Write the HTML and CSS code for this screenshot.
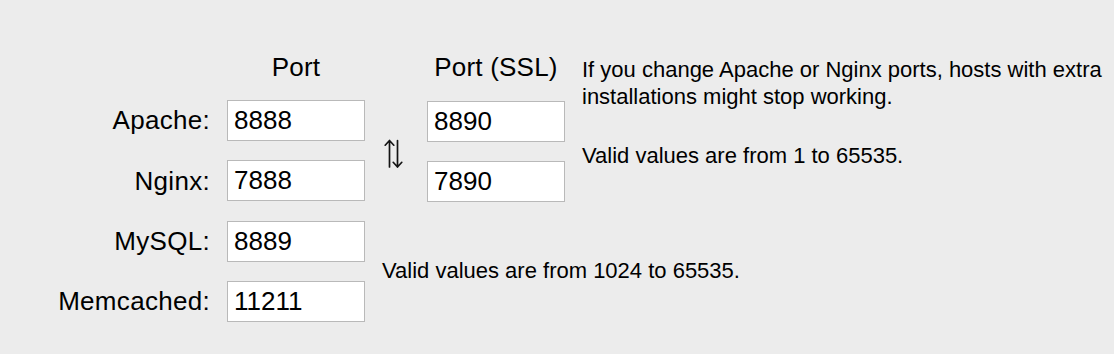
FILE: index.html
```html
<!DOCTYPE html>
<html lang="en">
<head>
<meta charset="utf-8">
<title>Ports</title>
<link rel="stylesheet" href="styles.css">
</head>
<body>
<div class="ports">
  <div class="head head-port">Port</div>
  <div class="head head-ssl">Port (SSL)</div>
  <div class="note">
    <p class="note-line">If you change Apache or Nginx ports, hosts with extra installations might stop working.</p>
    <p class="note-range">Valid values are from 1 to 65535.</p>
  </div>

  <label class="label row-apache" for="apache">Apache:</label>
  <input class="field col-port row-apache" id="apache" value="8888">
  <input class="field col-ssl row-apache" value="8890">

  <div class="swap">
    <svg width="20" height="30" viewBox="0 0 20 30" fill="none" stroke="#141414" stroke-width="1.7" stroke-linecap="round" stroke-linejoin="round">
      <path d="M5.5 1.5 V28 M1.2 6.2 L5.5 1.5 L9.8 6.2"/>
      <path d="M13.5 1.5 V28 M9.2 23.3 L13.5 28 L17.8 23.3"/>
    </svg>
  </div>

  <label class="label row-nginx" for="nginx">Nginx:</label>
  <input class="field col-port row-nginx" id="nginx" value="7888">
  <input class="field col-ssl row-nginx" value="7890">

  <label class="label row-mysql" for="mysql">MySQL:</label>
  <input class="field col-port row-mysql" id="mysql" value="8889">

  <label class="label row-memcached" for="memcached">Memcached:</label>
  <input class="field col-port row-memcached" id="memcached" value="11211">

  <div class="range-low">Valid values are from 1024 to 65535.</div>
</div>
</body>
</html>
```

FILE: styles.css
```css
html, body {
  margin: 0;
  padding: 0;
  background: #ececec;
  height: 100%;
}

body {
  font-family: "Liberation Sans", Arial, sans-serif;
  color: #000;
}

.ports {
  display: grid;
  grid-template-columns: 190px 138px 28px 138px 1fr;
  grid-template-rows: 28.67px repeat(4, 41px);
  column-gap: 17px;
  row-gap: 19.33px;
  padding: 52px 0 0 20px;
}

.head {
  grid-row: 1;
  font-size: 26px;
  line-height: 30px;
  letter-spacing: 0.2px;
  text-align: center;
  white-space: nowrap;
}

.head-port { grid-column: 2; }
.head-ssl { grid-column: 4; }

.note {
  grid-column: 5;
  grid-row: 1 / 4;
  align-self: start;
  padding-top: 4px;
  font-size: 22px;
  line-height: 27px;
}

.note p {
  margin: 0;
}

.note-range {
  margin-top: 32px !important;
}

.label {
  grid-column: 1;
  align-self: center;
  text-align: right;
  font-size: 26px;
  line-height: 30px;
  letter-spacing: 0.3px;
  white-space: nowrap;
}

.row-apache { grid-row: 2; }
.row-nginx { grid-row: 3; }
.row-mysql { grid-row: 4; }
.row-memcached { grid-row: 5; }

.col-port { grid-column: 2; }
.col-ssl { grid-column: 4; }

.field {
  box-sizing: border-box;
  width: 138px;
  height: 41px;
  margin: 0;
  padding: 0 6px;
  border: 1px solid #b9b9b9;
  border-radius: 0;
  background: #fff;
  font-family: "Liberation Sans", Arial, sans-serif;
  font-size: 26px;
  color: #000;
  outline: none;
}

.col-ssl.row-apache,
.col-ssl.row-nginx {
  margin-top: 1px;
}

.swap {
  grid-column: 3;
  grid-row: 2 / 4;
  align-self: center;
  display: flex;
  margin-top: 6px;
  padding-left: 2px;
}

.range-low {
  grid-column: 3 / 6;
  grid-row: 4 / 6;
  align-self: center;
  font-size: 22px;
  line-height: 26px;
  white-space: nowrap;
}
```
